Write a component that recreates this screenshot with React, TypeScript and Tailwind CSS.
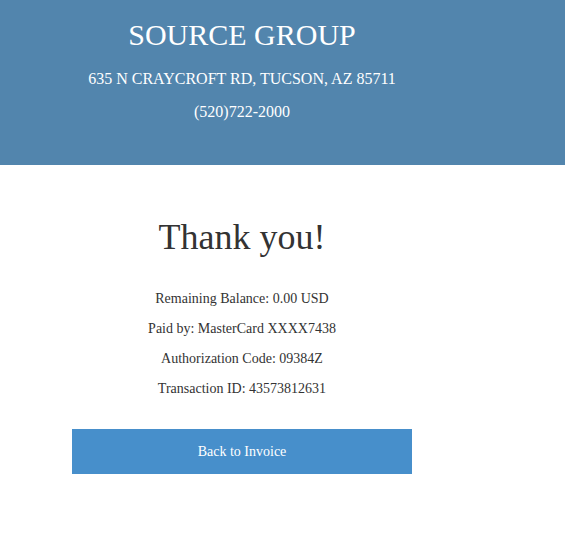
import React from 'react';

const details = [
  'Remaining Balance: 0.00 USD',
  'Paid by: MasterCard XXXX7438',
  'Authorization Code: 09384Z',
  'Transaction ID: 43573812631',
];

const App: React.FC = () => {
  return (
    <div className="min-h-screen bg-white font-['Liberation_Serif',serif]">
      {/* Header */}
      <div className="h-[165px] bg-[#5285ad] text-white">
        <div className="w-[484px] flex flex-col items-center pt-[17px]">
          <h1 className="text-[30px] leading-[36px]">SOURCE GROUP</h1>
          <p className="mt-[16px] text-[16px] leading-[20px]">635 N CRAYCROFT RD, TUCSON, AZ 85711</p>
          <p className="mt-[13px] text-[16px] leading-[20px]">(520)722-2000</p>
        </div>
      </div>

      {/* Receipt */}
      <div className="w-[484px] flex flex-col items-center text-[#333333]">
        <h2 className="mt-[50px] text-[36px] leading-[44px]">Thank you!</h2>
        <div className="mt-[30px] flex flex-col items-center gap-[10px]">
          {details.map((line) => (
            <p key={line} className="text-[14px] leading-[20px]">{line}</p>
          ))}
        </div>
        <button className="mt-[30px] w-[340px] h-[45px] bg-[#478fcb] text-white text-[14px]">
          Back to Invoice
        </button>
      </div>
    </div>
  );
};

export default App;
